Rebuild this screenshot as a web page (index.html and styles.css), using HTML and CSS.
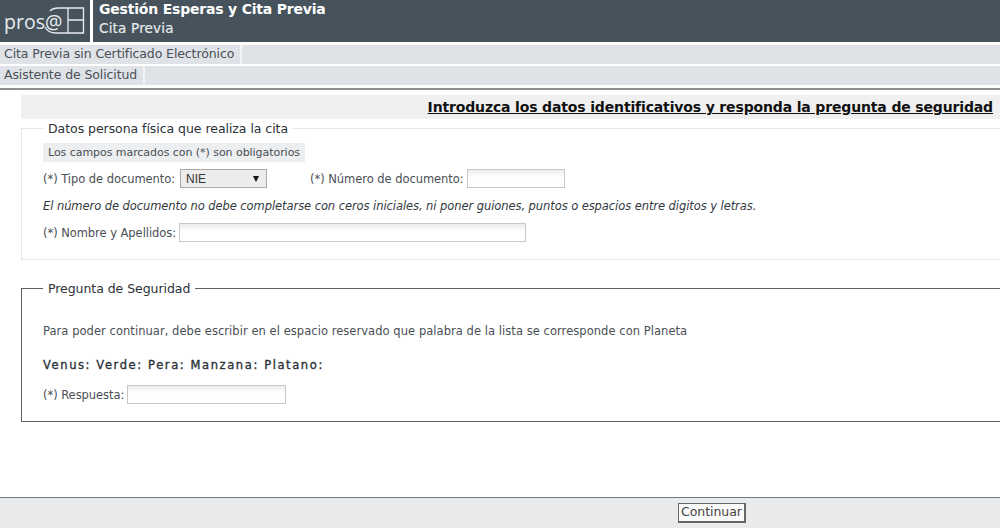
FILE: index.html
```html
<!DOCTYPE html>
<html lang="es">
<head>
<meta charset="utf-8">
<title>Cita Previa</title>
<link rel="stylesheet" href="styles.css">
</head>
<body>
<header class="top">
  <div class="logo">
    <span class="logo-text">pros@</span>
    <svg class="logo-mark" width="90" height="42" viewBox="0 0 90 42" fill="none" stroke="#e8ecee" stroke-width="1.3">
      <path d="M50 11C52 9 54 8 58 8H83.500V33H56C51 33 47 31 45 27"/>
      <path d="M68 8V33M68 20H83.500"/>
    </svg>
  </div>
  <div class="titles">
    <div class="app-title">Gestión Esperas y Cita Previa</div>
    <div class="app-sub">Cita Previa</div>
  </div>
</header>
<nav class="crumbs">
  <div class="crumb"><span class="crumb-text">Cita Previa sin Certificado Electrónico</span></div>
  <div class="crumb"><span class="crumb-text">Asistente de Solicitud</span></div>
</nav>
<main class="content">
  <h1 class="page-title"><span>Introduzca los datos identificativos y responda la pregunta de seguridad</span></h1>
  <fieldset class="box box-light">
    <legend>Datos persona física que realiza la cita</legend>
    <div class="note">Los campos marcados con (*) son obligatorios</div>
    <div class="row row-doc">
      <label class="field">(*) Tipo de documento:
        <span class="select">NIE<span class="arrow"></span></span>
      </label>
      <label class="field">(*) Número de documento:
        <span class="input input-doc"></span>
      </label>
    </div>
    <p class="hint">El número de documento no debe completarse con ceros iniciales, ni poner guiones, puntos o espacios entre digitos y letras.</p>
    <div class="row">
      <label class="field">(*) Nombre y Apellidos:
        <span class="input input-name"></span>
      </label>
    </div>
  </fieldset>
  <fieldset class="box box-dark">
    <legend>Pregunta de Seguridad</legend>
    <p class="question">Para poder continuar, debe escribir en el espacio reservado que palabra de la lista se corresponde con Planeta</p>
    <p class="words">Venus: Verde: Pera: Manzana: Platano:</p>
    <label class="field">(*) Respuesta:
      <span class="input input-answer"></span>
    </label>
  </fieldset>
</main>
<footer class="foot">
  <button class="btn" type="button">Continuar</button>
</footer>
</body>
</html>
```
FILE: styles.css
```css
* { box-sizing: border-box; }
html, body { margin: 0; height: 528px; overflow: hidden; }
body {
  display: flex;
  flex-direction: column;
  background: #fff;
  color: #4a4f55;
  font-family: "DejaVu Sans", sans-serif;
  font-size: 10px;
}
.top { display: flex; gap: 3px; height: 42px; margin-bottom: 3px; color: #fff; }
.logo { position: relative; display: flex; align-items: center; width: 90px; padding-left: 4px; background: #47535c; }
.logo-text { font-family: "Open Sans", sans-serif; font-size: 19.500px; color: #e8ecee; }
.logo-mark { position: absolute; top: 0; left: 0; }
.titles { flex: 1; padding: 0 0 0 6px; background: #47535c; }
.app-title { font-size: 14px; font-weight: 700; line-height: 18px; letter-spacing: -0.2px; }
.app-sub { font-size: 13.500px; line-height: 20px; color: #e6eaec; letter-spacing: 0.2px; -webkit-text-stroke: 0.2px #e6eaec; }
.crumbs { display: flex; flex-direction: column; gap: 2px; padding-bottom: 3px; border-bottom: 2px solid #8a8f92; }
.crumb { display: flex; height: 19px; background: #dfe3e7; }
.crumb-text { padding: 0 6px 0 4px; border-right: 2px solid #f2f4f5; font-size: 12.500px; line-height: 18px; color: #4a5057; letter-spacing: -0.1px; }
.content { flex: 1; padding: 5px 0 0 21px; }
.page-title { display: flex; justify-content: flex-end; height: 24px; margin: 0 0 1px; padding-right: 7px; background: #f0f0f0; color: #111; font-size: 14px; line-height: 24px; letter-spacing: -0.15px; }
.page-title span { text-decoration: underline; }
.box { margin: 0; min-width: 0; }
.box legend { height: 16px; padding: 0 5px; font-size: 12.500px; line-height: 18px; color: #2c3238; letter-spacing: -0.05px; }
.box-light { height: 140px; padding: 7px 0 0 21px; border: 1px solid #e6e6e6; border-right: 0; }
.box-dark { height: 142px; margin-top: 20px; padding: 28px 0 0 21px; border: 1px solid #5d6266; border-right: 0; }
.note { width: fit-content; height: 19px; margin-bottom: 7px; padding: 0 5px; background: #eceef0; font-size: 11px; line-height: 20px; letter-spacing: -0.05px; }
.row { display: flex; }
.row-doc { gap: 43px; }
.field { display: flex; align-items: center; gap: 3px; height: 19px; font-size: 11.500px; letter-spacing: -0.05px; white-space: nowrap; }
.select { display: flex; align-items: center; justify-content: space-between; width: 87px; height: 19px; margin-left: 2px; padding: 0 7px 0 5px; border: 1px solid #a9a9a9; background: #ececec; color: #333; font-family: "Liberation Sans", sans-serif; font-size: 12px; letter-spacing: 0; }
.arrow { width: 0; height: 0; border-left: 3.500px solid transparent; border-right: 3.500px solid transparent; border-top: 6px solid #111; }
.input { display: block; height: 19px; border: 1px solid #c8c8c8; background: linear-gradient(#ececec, #fff 45%); }
.input-doc { width: 98px; }
.input-name { width: 347px; }
.input-answer { width: 159px; }
.hint { margin: 11px 0 10px; font-size: 11.500px; line-height: 14px; font-style: italic; color: #33393f; letter-spacing: -0.07px; white-space: nowrap; }
.question { margin: 0 0 20px; font-size: 11.500px; line-height: 14px; letter-spacing: 0.05px; }
.words { margin: 0 0 13px; font-size: 11.500px; line-height: 14px; font-weight: 400; color: #2c3238; letter-spacing: 1.6px; -webkit-text-stroke: 0.35px #2c3238; }
.foot { flex: none; height: 31px; padding: 5px 0 0 678px; background: #e8eaec; border-top: 1px solid #6b7a85; }
.btn { display: block; width: 68px; height: 20px; padding: 0 0 2px; border: 2px solid #666; border-top-width: 1px; border-left-width: 1px; background: #fafafa; color: #444; font-family: "DejaVu Sans", sans-serif; font-size: 12.500px; letter-spacing: -0.05px; }
```
